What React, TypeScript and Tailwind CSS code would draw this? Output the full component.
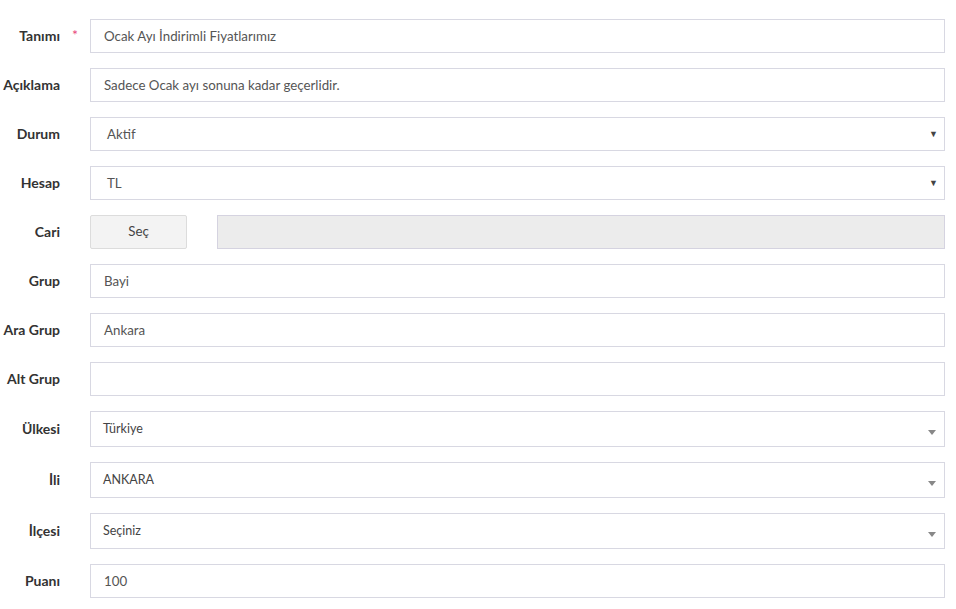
import type { ReactNode } from 'react'

const font = { fontFamily: '"Source Sans Pro", Lato, "Liberation Sans", sans-serif' }

function Row({ label, required, children }: { label: string; required?: boolean; children: ReactNode }) {
  return (
    <div className="flex items-center">
      <div className="w-[90px] shrink-0 pr-[30px] text-right leading-none">
        <span className="relative -top-[1px] text-[14px] font-bold text-[#333]">
          {label}
          {required && <span className="absolute left-[calc(100%+12px)] top-[1px] text-[14px] font-normal text-[#e8467c]">*</span>}
        </span>
      </div>
      <div className="flex min-w-0 flex-1 items-center pr-[11px]">{children}</div>
    </div>
  )
}

function TextBox({ value = '' }: { value?: string }) {
  return (
    <div className="flex h-[34px] flex-1 items-center border border-[#d8d8e2] bg-white px-[13px] pt-[1px] text-[13.3px] text-[#555]">
      {value}
    </div>
  )
}

function NativeSelect({ value }: { value: string }) {
  return (
    <div className="flex h-[34px] flex-1 items-center justify-between border border-[#d8d8e2] bg-white pl-[16px] pr-[6px] text-[13.3px] text-[#555]">
      <span className="pt-[2px]">{value}</span>
      <span className="text-[9px] text-[#444]">▼</span>
    </div>
  )
}

function Select2({ value }: { value: string }) {
  return (
    <div className="flex h-[36px] flex-1 items-center justify-between border border-[#d8d8e2] bg-white pl-[12px] pr-[8px] text-[12.5px] text-[#444]">
      <span>{value}</span>
      <span className="mt-[7px] h-0 w-0 border-x-[4px] border-t-[5px] border-x-transparent border-t-[#888]" />
    </div>
  )
}

export default function App() {
  return (
    <div className="min-h-[609px] w-[956px] bg-white pt-[19px]" style={font}>
      <div className="flex flex-col gap-[15px]">
        <Row label="Tanımı" required>
          <TextBox value="Ocak Ayı İndirimli Fiyatlarımız" />
        </Row>
        <Row label="Açıklama">
          <TextBox value="Sadece Ocak ayı sonuna kadar geçerlidir." />
        </Row>
        <Row label="Durum">
          <NativeSelect value="Aktif" />
        </Row>
        <Row label="Hesap">
          <NativeSelect value="TL" />
        </Row>
        <Row label="Cari">
          <button className="h-[34px] w-[97px] shrink-0 rounded-[2px] border border-[#dcdcdc] bg-[#f3f3f3] text-[13.3px] text-[#444]">
            Seç
          </button>
          <div className="ml-[30px] h-[34px] flex-1 border border-[#d5d3e0] bg-[#ececec]" />
        </Row>
        <Row label="Grup">
          <TextBox value="Bayi" />
        </Row>
        <Row label="Ara Grup">
          <TextBox value="Ankara" />
        </Row>
        <Row label="Alt Grup">
          <TextBox />
        </Row>
        <Row label="Ülkesi">
          <Select2 value="Türkiye" />
        </Row>
        <Row label="İli">
          <Select2 value="ANKARA" />
        </Row>
        <Row label="İlçesi">
          <Select2 value="Seçiniz" />
        </Row>
        <Row label="Puanı">
          <TextBox value="100" />
        </Row>
      </div>
    </div>
  )
}
